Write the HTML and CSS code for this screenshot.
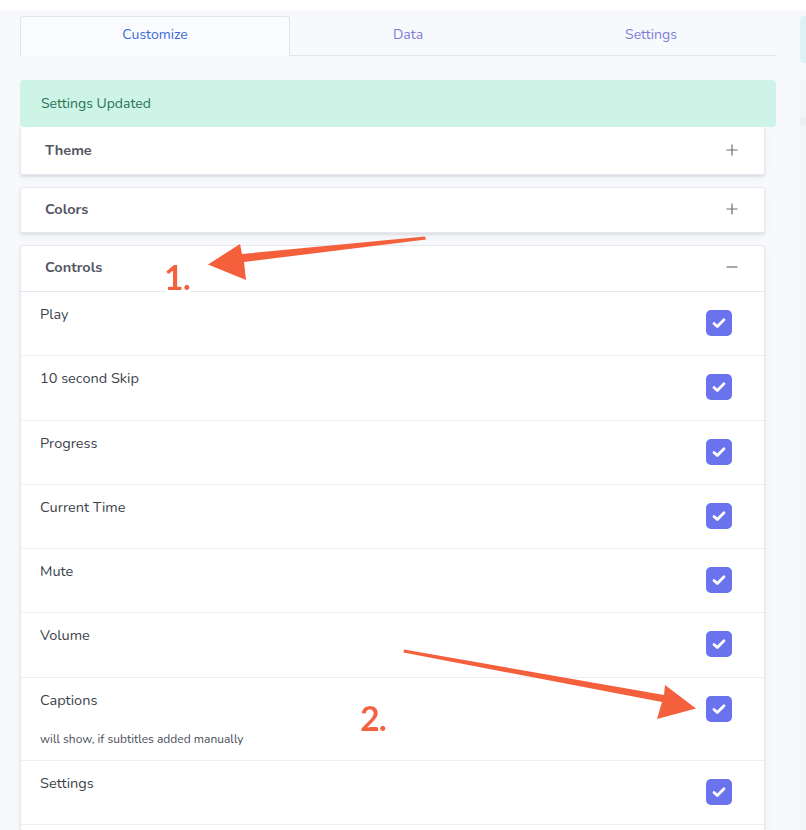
FILE: index.html
```html
<!DOCTYPE html>
<html>
<head>
<meta charset="utf-8">
<link rel="stylesheet" href="styles.css">
</head>
<body>
<div class="topstrip"></div>
<div class="layout">
  <main class="main">
    <nav class="tabs">
      <div class="tab tab-customize active">Customize</div>
      <div class="tab tab-data">Data</div>
      <div class="tab tab-settings">Settings</div>
    </nav>
    <div class="alert">Settings Updated</div>
    <div class="cards">
      <section class="card">
        <div class="card-header"><span>Theme</span>
          <svg class="toggle" width="12" height="12" viewBox="0 0 12 12"><path d="M6 0.5V11.5M0.5 6H11.5" stroke="#6b6e78" stroke-width="1.2"/></svg>
        </div>
      </section>
      <section class="card">
        <div class="card-header"><span>Colors</span>
          <svg class="toggle" width="12" height="12" viewBox="0 0 12 12"><path d="M6 0.5V11.5M0.5 6H11.5" stroke="#6b6e78" stroke-width="1.2"/></svg>
        </div>
      </section>
      <section class="card card-open">
        <div class="card-header bordered"><span>Controls</span>
          <svg class="toggle" width="12" height="12" viewBox="0 0 12 12"><path d="M0.5 6H11.5" stroke="#6b6e78" stroke-width="1.2"/></svg>
        </div>
        <div class="row"><div class="label">Play</div><span class="check"><svg width="26" height="26" viewBox="0 0 26 26"><path d="M8 13.5L11.3 16.6L18 9.8" fill="none" stroke="#fff" stroke-width="2.8" stroke-linecap="round" stroke-linejoin="round"/></svg></span></div>
        <div class="row"><div class="label">10 second Skip</div><span class="check"><svg width="26" height="26" viewBox="0 0 26 26"><path d="M8 13.5L11.3 16.6L18 9.8" fill="none" stroke="#fff" stroke-width="2.8" stroke-linecap="round" stroke-linejoin="round"/></svg></span></div>
        <div class="row"><div class="label">Progress</div><span class="check"><svg width="26" height="26" viewBox="0 0 26 26"><path d="M8 13.5L11.3 16.6L18 9.8" fill="none" stroke="#fff" stroke-width="2.8" stroke-linecap="round" stroke-linejoin="round"/></svg></span></div>
        <div class="row"><div class="label">Current Time</div><span class="check"><svg width="26" height="26" viewBox="0 0 26 26"><path d="M8 13.5L11.3 16.6L18 9.8" fill="none" stroke="#fff" stroke-width="2.8" stroke-linecap="round" stroke-linejoin="round"/></svg></span></div>
        <div class="row"><div class="label">Mute</div><span class="check"><svg width="26" height="26" viewBox="0 0 26 26"><path d="M8 13.5L11.3 16.6L18 9.8" fill="none" stroke="#fff" stroke-width="2.8" stroke-linecap="round" stroke-linejoin="round"/></svg></span></div>
        <div class="row"><div class="label">Volume</div><span class="check"><svg width="26" height="26" viewBox="0 0 26 26"><path d="M8 13.5L11.3 16.6L18 9.8" fill="none" stroke="#fff" stroke-width="2.8" stroke-linecap="round" stroke-linejoin="round"/></svg></span></div>
        <div class="row row-tall"><div class="label">Captions<div class="hint">will show, if subtitles added manually</div></div><span class="check"><svg width="26" height="26" viewBox="0 0 26 26"><path d="M8 13.5L11.3 16.6L18 9.8" fill="none" stroke="#fff" stroke-width="2.8" stroke-linecap="round" stroke-linejoin="round"/></svg></span></div>
        <div class="row"><div class="label">Settings</div><span class="check"><svg width="26" height="26" viewBox="0 0 26 26"><path d="M8 13.5L11.3 16.6L18 9.8" fill="none" stroke="#fff" stroke-width="2.8" stroke-linecap="round" stroke-linejoin="round"/></svg></span></div>
        <div class="card-rest"></div>
      </section>
    </div>
  </main>
  <aside class="side">
    <div class="side-info"></div>
    <div class="side-panel"><div class="side-band"></div></div>
  </aside>
</div>

<svg class="annot" width="806" height="830" viewBox="0 0 806 830">
  <defs>
    <filter id="glow" x="-30%" y="-30%" width="160%" height="160%">
      <feMorphology in="SourceAlpha" operator="dilate" radius="1.6" result="d"/>
      <feGaussianBlur in="d" stdDeviation="0.6" result="b"/>
      <feFlood flood-color="#ffffff"/>
      <feComposite in2="b" operator="in" result="w"/>
      <feMerge><feMergeNode in="w"/><feMergeNode in="SourceGraphic"/></feMerge>
    </filter>
  </defs>
  <g fill="#f5603c">
    <polygon points="425,236.5 426,239.5 244,262 246,280 208,264.5 240,244 242,254"/>
    <polygon points="404,649.5 403.5,652.5 662,702 657,719 696,708.5 665,685 664,695"/>
  </g>
  <g class="num" filter="url(#glow)">
    <text x="164" y="290">1.</text>
    <text x="360" y="731">2.</text>
  </g>
</svg>
</body>
</html>
```
FILE: styles.css
```css
* { box-sizing: border-box; }
html, body { margin: 0; padding: 0; }
body {
  background: #f8f9fc;
  font-family: "Nunito", "Lato", "Open Sans", sans-serif;
  color: #3b3e4a;
  width: 806px;
  height: 830px;
  overflow: hidden;
  position: relative;
}
.topstrip { height: 10px; background: #ffffff; }
.layout {
  display: flex;
  padding-left: 20px;
  gap: 24px;
}
.main { width: 756px; flex: none; padding-top: 6px; }

.tabs {
  display: flex;
  height: 40px;
  border-bottom: 1px solid #e1e4ea;
}
.tab {
  display: flex;
  align-items: center;
  justify-content: center;
  font-size: 14px;
  color: #7a7fd6;
  height: 40px;
  padding-bottom: 3px;
}
.tab-customize { width: 270px; }
.tab-data { width: 236px; }
.tab-settings { width: 250px; }
.tab.active {
  color: #3e6ad8;
  background: #fafbfe;
  border: 1px solid #e1e4ea;
  border-bottom: none;
  border-radius: 3px 3px 0 0;
  height: 40px;
  margin-bottom: -1px;
  padding-bottom: 4px;
}

.alert {
  margin-top: 24px;
  height: 47px;
  background: #cdf4e6;
  color: #2a7356;
  border-radius: 4px;
  font-size: 14px;
  padding-left: 21px;
  display: flex;
  align-items: center;
}

.cards {
  width: 745px;
  display: flex;
  flex-direction: column;
  gap: 12px;
}
.card {
  background: #ffffff;
  border: 1px solid #e6e8ee;
  border-radius: 3px;
  box-shadow: 0 2px 2px rgba(40, 45, 70, 0.09), 0 4px 10px rgba(40, 45, 70, 0.04);
}
.card:first-child { border-top: none; border-radius: 0 0 3px 3px; }
.card-header {
  height: 44px;
  display: flex;
  align-items: center;
  justify-content: space-between;
  padding: 0 26px 2px 24px;
  font-size: 14.5px;
  font-weight: 700;
  color: #535663;
}
.card:first-child .card-header { height: 47px; }
.card-header.bordered { height: 46px; padding-bottom: 4px; border-bottom: 1px solid #e6e8ee; }
.toggle { display: block; }

.row {
  display: flex;
  justify-content: space-between;
  align-items: flex-start;
  min-height: 64.3px;
  padding: 12px 32px 12px 19px;
  border-bottom: 1px solid #eceef2;
}
.label {
  font-size: 14.5px;
  line-height: 21px;
  color: #3c3f4b;
}
.hint {
  font-size: 12px;
  line-height: 18px;
  margin-top: 19px;
  margin-bottom: 0;
  color: #4a4d58;
}
.row-tall { min-height: 82px; }
.check {
  width: 26px;
  height: 26px;
  margin-top: 6px;
  border-radius: 5px;
  background: #6a72ee;
  display: block;
}
.check svg { display: block; }
.card-rest { height: 40px; }

.side { flex: 1; padding-top: 6px; }
.side-info {
  height: 47px;
  background: #dff2f6;
  border-radius: 4px 0 0 4px;
}
.side-panel {
  margin-top: 17px;
  height: 760px;
  background: #f4f5f8;
  padding-top: 37px;
}
.side-band { height: 8px; background: #eceef2; }

.annot {
  position: absolute;
  left: 0;
  top: 0;
  pointer-events: none;
}
.num text {
  font-family: "Lato", "Open Sans", sans-serif;
  font-size: 34px;
  font-weight: 700;
  fill: #f5603c;
  letter-spacing: -1px;
}
```
